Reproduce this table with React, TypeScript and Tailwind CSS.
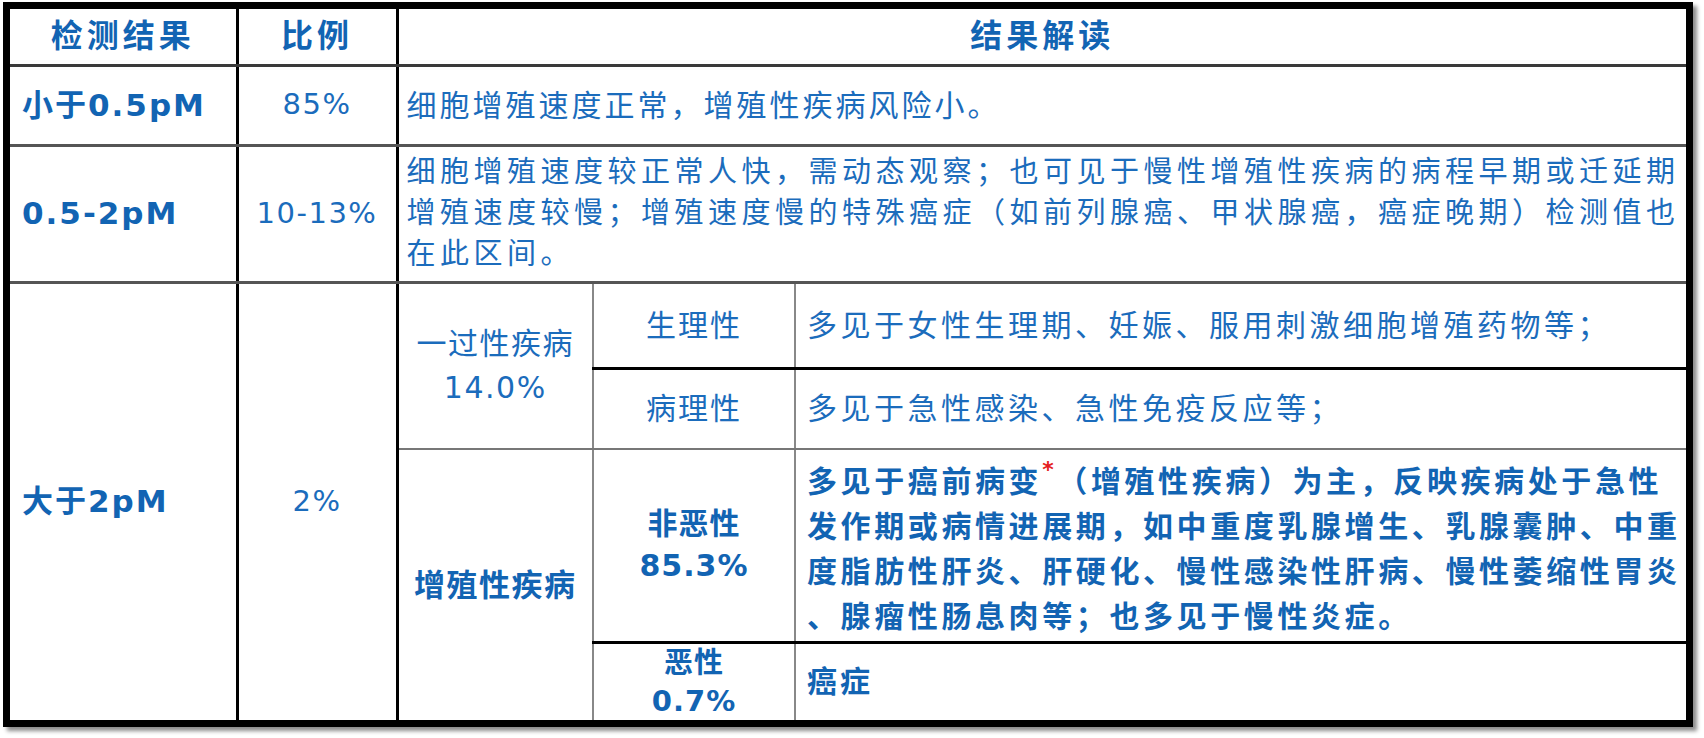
const font = "font-['DejaVu_Sans','Noto_Sans_CJK_SC',sans-serif]";

export default function App() {
  return (
    <div className={`min-h-screen bg-white pl-[3px] pt-[2px] ${font}`}>
      <div className="w-[1690px] border-[7px] border-black bg-white shadow-[4px_4px_4px_rgba(0,0,0,0.45)]">
        <table className="w-full table-fixed border-collapse text-[#1b6cbc]">
          <colgroup>
            <col className="w-[227px]" />
            <col className="w-[160px]" />
            <col className="w-[196px]" />
            <col className="w-[202px]" />
            <col />
          </colgroup>
          <tbody>
            {/* header */}
            <tr className="h-[56px] text-[32px] font-bold tracking-[4px] text-[#1264b3]">
              <td className="border-r-[3px] border-b-[3px] border-r-black border-b-[#3a3a3a] text-center">检测结果</td>
              <td className="border-r-[3px] border-b-[3px] border-r-black border-b-[#3a3a3a] text-center">比例</td>
              <td colSpan={3} className="border-b-[3px] border-b-[#3a3a3a] text-center">结果解读</td>
            </tr>

            {/* 小于0.5pM */}
            <tr className="h-[80px]">
              <td className="border-r-[3px] border-b-[3px] border-r-black border-b-[#555] pl-[12px] text-[31px] font-bold tracking-[2px] text-[#1264b3]">小于0.5pM</td>
              <td className="border-r-[3px] border-b-[3px] border-r-black border-b-[#555] text-center text-[29px] tracking-[1.5px]">85%</td>
              <td colSpan={3} className="border-b-[3px] border-b-[#555] pl-[8px] text-[30px] tracking-[3px]">细胞增殖速度正常，增殖性疾病风险小。</td>
            </tr>

            {/* 0.5-2pM */}
            <tr className="h-[137px]">
              <td className="border-r-[3px] border-b-[3px] border-r-black border-b-[#555] pl-[12px] text-[31px] font-bold tracking-[2px] text-[#1264b3]">0.5-2pM</td>
              <td className="border-r-[3px] border-b-[3px] border-r-black border-b-[#555] text-center text-[29px] tracking-[1.5px]">10-13%</td>
              <td colSpan={3} className="border-b-[3px] border-b-[#555] pl-[8px] text-[29px] leading-[41px] tracking-[4.5px] whitespace-nowrap">
                细胞增殖速度较正常人快，需动态观察；也可见于慢性增殖性疾病的病程早期或迁延期
                <br />
                增殖速度较慢；增殖速度慢的特殊癌症（如前列腺癌、甲状腺癌，癌症晚期）检测值也
                <br />
                在此区间。
              </td>
            </tr>

            {/* 大于2pM */}
            <tr className="h-[86px]">
              <td rowSpan={4} className="border-r-[3px] border-r-black pl-[12px] text-[31px] font-bold tracking-[2px] text-[#1264b3]">大于2pM</td>
              <td rowSpan={4} className="border-r-[3px] border-r-black text-center text-[29px] tracking-[1.5px]">2%</td>
              <td rowSpan={2} className="border-r-2 border-b-2 border-r-[#888] border-b-[#777] text-center text-[30px] leading-[44px] tracking-[1.5px]">
                一过性疾病
                <br />
                14.0%
              </td>
              <td className="border-r-2 border-b-[3px] border-r-[#888] border-b-black text-center text-[30px] tracking-[2px]">生理性</td>
              <td className="border-b-[3px] border-b-black pl-[11px] text-[30px] tracking-[3.5px] whitespace-nowrap">多见于女性生理期、妊娠、服用刺激细胞增殖药物等；</td>
            </tr>
            <tr className="h-[81px]">
              <td className="border-r-2 border-b-2 border-r-[#888] border-b-[#777] text-center text-[30px] tracking-[2px]">病理性</td>
              <td className="border-b-2 border-b-[#777] pl-[11px] text-[30px] tracking-[3.5px] whitespace-nowrap">多见于急性感染、急性免疫反应等；</td>
            </tr>
            <tr className="h-[193px] font-bold text-[#1264b3]">
              <td rowSpan={2} className="border-r-2 border-r-[#888] text-center text-[31px] tracking-[1.5px]">增殖性疾病</td>
              <td className="border-r-2 border-b-[3px] border-r-[#888] border-b-black text-center text-[30px] leading-[42px] tracking-[1px]">
                非恶性
                <br />
                85.3%
              </td>
              <td className="border-b-[3px] border-b-black pl-[11px] pt-[8px] text-[30px] leading-[45px] tracking-[3.6px] whitespace-nowrap">
                多见于癌前病变<span className="align-top text-[22px] leading-none text-[#e52020]">*</span>（增殖性疾病）为主，反映疾病处于急性
                <br />
                发作期或病情进展期，如中重度乳腺增生、乳腺囊肿、中重
                <br />
                度脂肪性肝炎、肝硬化、慢性感染性肝病、慢性萎缩性胃炎
                <br />
                、腺瘤性肠息肉等；也多见于慢性炎症。
              </td>
            </tr>
            <tr className="h-[76px] font-bold text-[#1264b3]">
              <td className="border-r-2 border-r-[#888] text-center text-[29px] leading-[38px] tracking-[1px]">
                恶性
                <br />
                0.7%
              </td>
              <td className="pl-[11px] text-[30px] tracking-[3px]">癌症</td>
            </tr>
          </tbody>
        </table>
      </div>
    </div>
  );
}
